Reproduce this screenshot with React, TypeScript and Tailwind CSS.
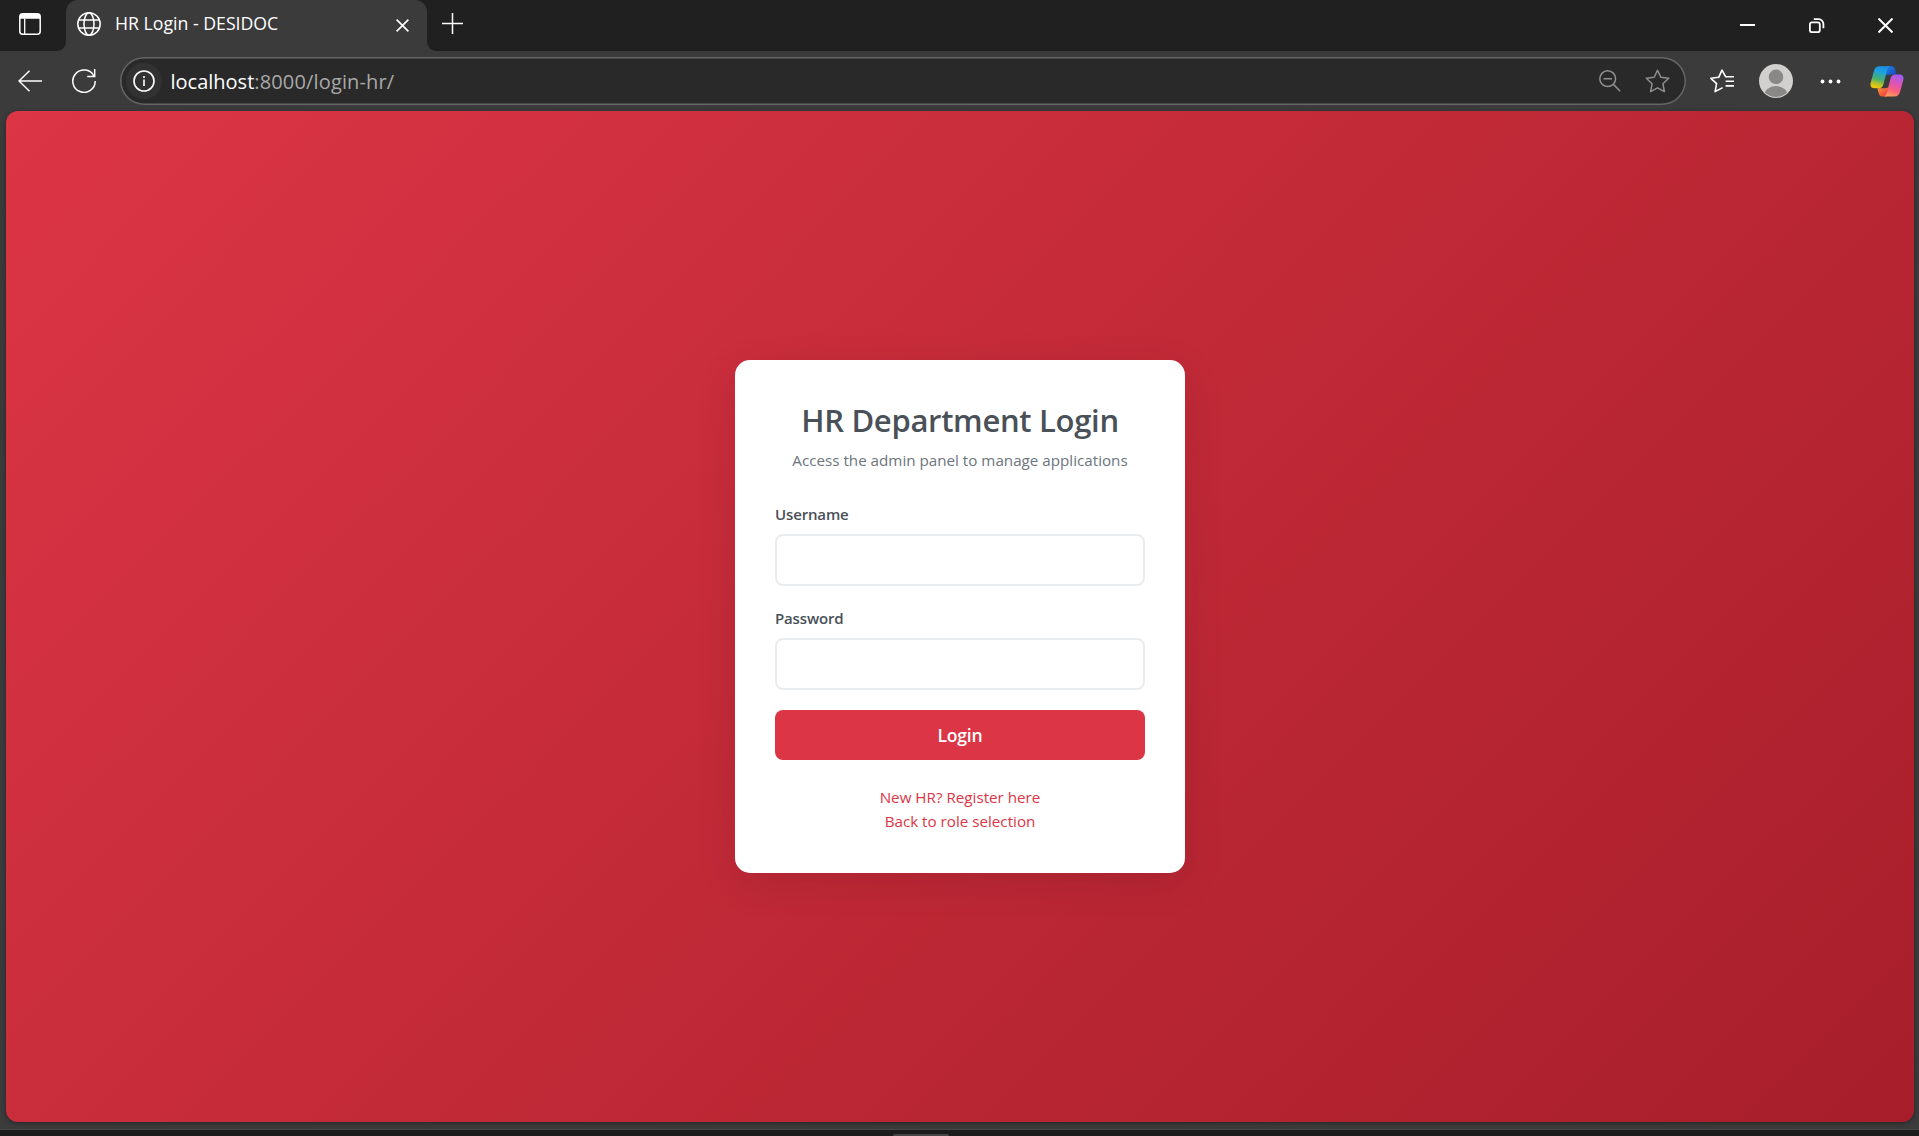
import React from "react";

const STAR = "M12 1.2 L15.3 8.3 L23.2 9.3 L17.4 14.7 L18.9 22.6 L12 18.8 L5.1 22.6 L6.6 14.7 L0.8 9.3 L8.7 8.3 Z";

function WorkspaceIcon() {
  return (
    <svg width="22" height="22" viewBox="0 0 22 22" fill="none">
      <rect x="0.8" y="0.8" width="20.4" height="20.4" rx="3" stroke="#fff" strokeWidth="1.5" />
      <path d="M0.8 5.7V3.8a3 3 0 0 1 3-3h14.4a3 3 0 0 1 3 3v1.900z" fill="#fff" />
      <path d="M5.7 5.500v15.500" stroke="#fff" strokeWidth="1.3" />
    </svg>
  );
}

function GlobeIcon() {
  return (
    <svg width="24" height="24" viewBox="0 0 24 24" fill="none" stroke="#fff" strokeWidth="1.5">
      <circle cx="12" cy="12" r="11.2" />
      <ellipse cx="12" cy="12" rx="5" ry="11.2" />
      <path d="M1.9 8h20.2M1.9 16h20.2" />
    </svg>
  );
}

function CopilotIcon() {
  return (
    <svg width="34" height="31" viewBox="0 0 34 31">
      <defs>
        <linearGradient id="cool" x1="0.6" y1="0" x2="0.35" y2="1">
          <stop offset="0" stopColor="#1b8fe8" />
          <stop offset="0.25" stopColor="#1ca2e0" />
          <stop offset="0.6" stopColor="#48b070" />
          <stop offset="0.85" stopColor="#c9c41f" />
          <stop offset="1" stopColor="#f2c80f" />
        </linearGradient>
        <linearGradient id="warm" x1="0.7" y1="0" x2="0.35" y2="1">
          <stop offset="0" stopColor="#a05cf0" />
          <stop offset="0.4" stopColor="#dd55b8" />
          <stop offset="0.7" stopColor="#f8607c" />
          <stop offset="1" stopColor="#fb9a5c" />
        </linearGradient>
        <linearGradient id="fold" x1="0" y1="0" x2="1" y2="1">
          <stop offset="0" stopColor="#1688e6" />
          <stop offset="1" stopColor="#1f3fbf" />
        </linearGradient>
        <linearGradient id="ember" x1="0" y1="0" x2="1" y2="1">
          <stop offset="0" stopColor="#f9a03c" />
          <stop offset="0.6" stopColor="#f4583c" />
          <stop offset="1" stopColor="#e83f4e" />
        </linearGradient>
      </defs>
      <path d="M17 0.300h4.600c2.200 0 3 1.300 3.600 3.100l1.500 5.200h-5.200c-3 0-4.500.300-5.900 1z" fill="url(#fold)" />
      <path d="M17 30.500h-4.600c-2.200 0-3-1.300-3.600-3.100l-1.500-5.200h5.200c3 0 4.500-.300 5.900-1z" fill="url(#ember)" />
      <path d="M9.500 0.300h10.800c-1.700.4-2.600 1.700-3.200 4l-3.700 14c-.7 2.700-2 3.900-4.800 3.900H4.200C1 22.200 0 19.600.7 16.800L3.900 5C4.800 1.900 6.500.3 9.500.3z" fill="url(#cool)" />
      <path d="M24.500 30.500h-10.800c1.700-.4 2.600-1.700 3.200-4l3.700-14c.7-2.700 2-3.900 4.800-3.900h4.400c3.200 0 4.200 2.600 3.500 5.400L30.100 25.800c-.9 3.100-2.600 4.700-5.600 4.700z" fill="url(#warm)" />
    </svg>
  );
}

function TabStrip() {
  return (
    <div className="flex h-[51px] bg-[#3b3b3b]">
      <div className="flex w-[66px] items-start rounded-br-[9px] bg-[#202020] pt-[13px] pl-[19px]">
        <WorkspaceIcon />
      </div>
      <div className="w-[361px] bg-[linear-gradient(#202020_50%,#3b3b3b_50%)]">
        <div className="flex h-full items-center rounded-t-[12px] bg-[#3b3b3b] pb-[3px] pl-[11px]">
          <GlobeIcon />
          <span className="mb-[2px] ml-[14px] w-[281px] whitespace-nowrap text-[17.700px] leading-6 text-white">HR Login - DESIDOC</span>
          <svg className="mt-[2px] shrink-0" width="13" height="13" viewBox="0 0 13 13">
            <path d="M0.600.6l11.800 11.800M12.400.6L.6 12.400" stroke="#fff" strokeWidth="1.600" />
          </svg>
        </div>
      </div>
      <div className="flex flex-1 items-start rounded-bl-[9px] bg-[#202020] pl-[15px]">
        <svg className="mt-[13px]" width="21" height="21" viewBox="0 0 21 21">
          <path d="M10.500 0v21M0 10.500h21" stroke="#fff" strokeWidth="1.500" />
        </svg>
        <div className="mt-[18px] mr-[26px] ml-auto flex items-start gap-[53.500px]">
          <svg width="15" height="15" viewBox="0 0 15 15">
            <path d="M0 7h15" stroke="#fff" strokeWidth="2" />
          </svg>
          <svg width="16" height="15" viewBox="0 0 16 15" fill="none" stroke="#fff" strokeWidth="1.800">
            <rect x="0.900" y="4.400" width="9.900" height="9.800" rx="2" />
            <path d="M4.800 1.200H9.500A4.700 4.700 0 0 1 14.400 6v4.300" />
          </svg>
          <svg width="15" height="15" viewBox="0 0 15 15">
            <path d="M0.500.5l14 14M14.500.5l-14 14" stroke="#fff" strokeWidth="2" />
          </svg>
        </div>
      </div>
    </div>
  );
}

function Toolbar() {
  return (
    <div className="flex h-[60px] items-center bg-[#3b3b3b] pr-[15px] pl-[18px]">
      <svg className="mb-px" width="24" height="22" viewBox="0 0 24 22" fill="none" stroke="#fff" strokeWidth="1.500">
        <path d="M24 11H1M11.500.8L1 11l10.500 10.200" />
      </svg>
      <svg className="ml-[30px]" width="24" height="24" viewBox="0 0 24 24" fill="none" stroke="#fff" strokeWidth="1.500">
        <path d="M22.200 7.500A11.200 11.200 0 1 0 23.200 12M22.700 0v7.500H15.200" />
      </svg>
      <div className="ml-6 flex h-12 w-[1566px] items-center rounded-full bg-[#292929] pr-4 pl-[6px] inset-ring-[1.5px] inset-ring-[#666]">
        <div className="flex size-9 items-center justify-center rounded-full bg-[#323232]">
          <svg width="22" height="22" viewBox="0 0 22 22" fill="none" stroke="#fff" strokeWidth="1.600">
            <circle cx="11" cy="11" r="10" />
            <path d="M11 9.500v6.500M11 6v2" />
          </svg>
        </div>
        <div className="mt-[2px] ml-[8.500px] flex text-[20px] leading-7 text-white">
          <span>localhost</span>
          <span className="tracking-[0.150px] text-[#a8a8a8]">:8000/login-hr/</span>
        </div>
        <svg className="ml-auto" width="22" height="22" viewBox="0 0 22 22" fill="none" stroke="#909090" strokeWidth="1.500">
          <circle cx="8.700" cy="8.700" r="7.900" />
          <path d="M14.400 14.400l6.800 6.800M4.500 8.700H13" />
        </svg>
        <svg className="ml-6" width="25" height="24" viewBox="0 0 24 24" fill="none" stroke="#909090" strokeWidth="1.500" strokeLinejoin="round">
          <path d={STAR} />
        </svg>
      </div>
      <svg className="ml-6" width="25" height="24" viewBox="0 0 25 24" fill="none" stroke="#fff" strokeWidth="1.600" strokeLinejoin="round">
        <path d="M24 7.800H15.700L12 1.200 8.700 8.300.9 9.300l5.700 5.400L5.100 22.600l7.500-4M15.600 12.300H24M15.600 16.900H24" />
      </svg>
      <svg className="ml-6" width="34" height="34" viewBox="0 0 34 34">
        <clipPath id="avatar"><circle cx="17" cy="17" r="16" /></clipPath>
        <circle cx="17" cy="17" r="17" fill="#d2d0ce" />
        <circle cx="17" cy="12.800" r="7.300" fill="#8a8886" />
        <ellipse cx="17" cy="32" rx="12" ry="10" fill="#8a8886" clipPath="url(#avatar)" />
      </svg>
      <svg className="ml-[27px]" width="21" height="5" viewBox="0 0 21 5" fill="#fff">
        <circle cx="2.500" cy="2.500" r="1.900" />
        <circle cx="10.500" cy="2.500" r="1.900" />
        <circle cx="18.500" cy="2.500" r="1.900" />
      </svg>
      <div className="ml-auto"><CopilotIcon /></div>
    </div>
  );
}

function Field({ label, type }: { label: string; type: string }) {
  return (
    <label className="block">
      <span className="block text-[15px] leading-5 font-semibold tracking-[-0.150px] text-[#495057]">{label}</span>
      <input type={type} className="mt-2.5 block h-[52px] w-full rounded-lg border-2 border-[#e9ecef] bg-white px-4 outline-none" />
    </label>
  );
}

function LoginCard() {
  return (
    <div className="w-[450px] rounded-[15px] bg-white p-10 shadow-[0_10px_40px_rgba(0,0,0,0.1)]">
      <h1 className="text-center text-[31px] leading-10 font-semibold tracking-[-0.300px] whitespace-nowrap text-[#495057]">HR Department Login</h1>
      <p className="mt-2.5 text-center text-[15.200px] leading-5 whitespace-nowrap text-[#6c757d]">Access the admin panel to manage applications</p>
      <form className="mt-[34px]">
        <div className="flex flex-col gap-[22px]">
          <Field label="Username" type="text" />
          <Field label="Password" type="password" />
        </div>
        <button type="button" className="mt-5 h-[50px] w-full rounded-lg bg-[#dc3545] pt-px text-[17.600px] font-semibold tracking-[-0.200px] text-white">Login</button>
      </form>
      <div className="mt-[25px] flex flex-col items-center text-[15.200px] leading-6 text-[#dc3545]">
        <a>New HR? Register here</a>
        <a>Back to role selection</a>
      </div>
    </div>
  );
}

export default function App() {
  return (
    <div className="flex h-[1136px] w-[1919px] flex-col overflow-hidden bg-[#1c1c1c] font-['Open_Sans',sans-serif]">
      <TabStrip />
      <Toolbar />
      <div className="h-[1019px] border-b border-[#484848] bg-[#3b3b3b] pr-[5px] pl-[6px]">
        <main className="flex h-[1011px] items-center justify-center rounded-[12px] bg-[linear-gradient(135deg,#dc3545_0%,#a71e2a_100%)] shadow-[0_1px_4px_rgba(0,0,0,0.4)]">
          <LoginCard />
        </main>
      </div>
      <div className="mt-1 ml-[893px] h-[2px] w-[56px] rounded-t bg-[#484848]" />
    </div>
  );
}
